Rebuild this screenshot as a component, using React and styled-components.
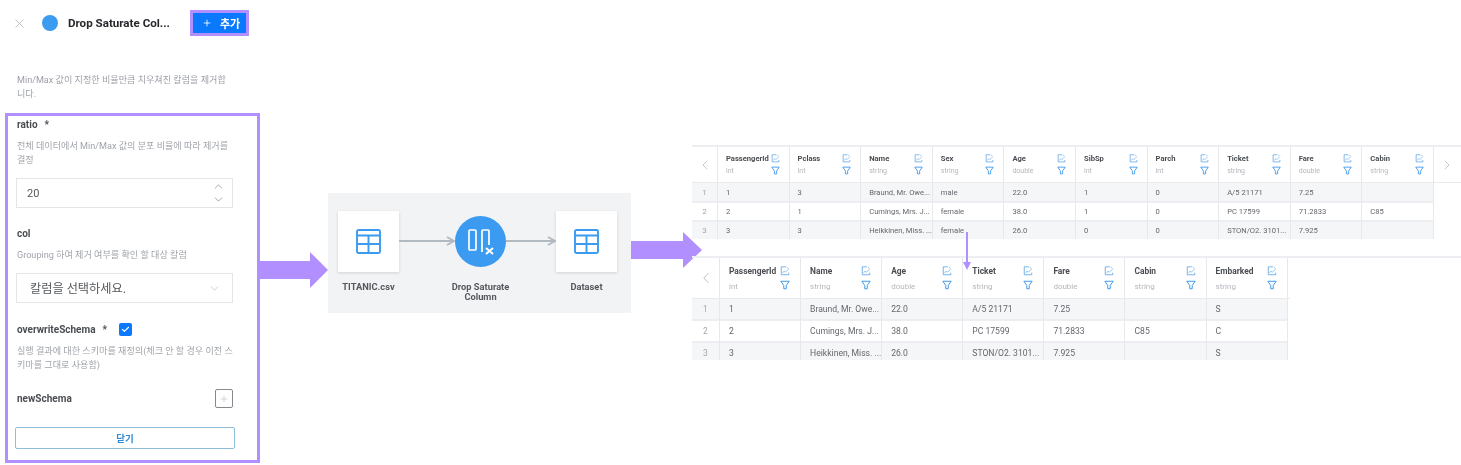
import React from "react";
import styled, {createGlobalStyle} from "styled-components";
import {X, Plus, ChevronUp, ChevronDown, ChevronLeft, ChevronRight, Check} from "lucide-react";

const GlobalStyle = createGlobalStyle`
    html, body {
        margin: 0;
        padding: 0;
        background: #ffffff;
    }
`

const KR = `"Roboto", "Noto Sans CJK KR", sans-serif`
const PURPLE = "#b18fff"
const BLUE = "#3b9bf0"

const Page = styled.div`
    display: flex;
    align-items: flex-start;
    width: 1461px;
    height: 465px;
    overflow: hidden;
    font-family: ${KR};
    filter: blur(0.45px);
`

// LEFT PANEL

const LeftCol = styled.div`
    width: 260px;
    flex: none;
`

const Header = styled.div`
    display: flex;
    align-items: center;
    height: 46px;
    padding-left: 12px;
`

const CloseIcon = styled(X)`
    color: #a9adb3;
    flex: none;
`

const Dot = styled.span`
    width: 16px;
    height: 16px;
    margin-left: 15px;
    border-radius: 50%;
    background: ${BLUE};
    flex: none;
`

const Title = styled.div`
    width: 122px;
    margin-left: 10px;
    font-size: 11.6px;
    font-weight: 700;
    color: #26282c;
    white-space: nowrap;
`

const AddButton = styled.div`
    display: flex;
    align-items: center;
    box-sizing: border-box;
    width: 59px;
    height: 26px;
    padding-left: 9px;
    border: 3px solid ${PURPLE};
    background: #0a78ff;
    color: #ffffff;
    font-size: 11px;
    font-weight: 700;
    gap: 8px;
`

const Lead = styled.div`
    margin: 27px 0 0 17px;
    font-size: 9.1px;
    line-height: 14px;
    color: #9b9fa6;
    white-space: nowrap;
`

const Frame = styled.div`
    box-sizing: border-box;
    width: 255px;
    height: 350px;
    margin: 12px 0 0 5px;
    padding: 0 0 0 8px;
    border: 3px solid ${PURPLE};
`

const Label = styled.div`
    display: flex;
    align-items: center;
    height: 16px;
    padding-left: 1px;
    margin-top: ${p => p.$top || 0}px;
    font-size: 10px;
    font-weight: 700;
    color: #4a4d52;
`

const Required = styled.span`
    margin-left: 7px;
`

const Help = styled.div`
    padding-left: 1px;
    margin-top: 7px;
    font-size: 9.1px;
    line-height: 14px;
    color: #a0a4aa;
    white-space: nowrap;
`

const InputBox = styled.div`
    display: flex;
    align-items: center;
    justify-content: space-between;
    box-sizing: border-box;
    width: 217px;
    height: 30px;
    margin-top: 11px;
    padding: 0 9px 0 10px;
    border: 1px solid #e3e5e8;
    font-size: 11px;
    color: #55585d;
`

const SelectText = styled.span`
    padding-left: 3px;
    font-size: 12.2px;
`

const Spinner = styled.div`
    display: flex;
    flex-direction: column;
    margin-right: -2px;
    color: #666a70;
`

const SelectChevron = styled(ChevronDown)`
    margin-right: 2px;
    color: #a0a3a8;
`

const CheckMark = styled.span`
    display: flex;
    align-items: center;
    justify-content: center;
    width: 13px;
    height: 13px;
    margin-left: 12px;
    border-radius: 2px;
    background: #0a78ff;
    color: #ffffff;
`

const SchemaRow = styled.div`
    display: flex;
    align-items: center;
    justify-content: space-between;
    width: 217px;
    height: 19px;
    margin-top: 17px;
    font-size: 10px;
    font-weight: 700;
    color: #4a4d52;
    padding-left: 1px;
    box-sizing: border-box;
`

const PlusBox = styled.span`
    display: flex;
    align-items: center;
    justify-content: center;
    box-sizing: border-box;
    width: 18px;
    height: 19px;
    border: 1px solid #85888d;
    border-radius: 2px;
    color: #9a9da2;
`

const CloseButton = styled.div`
    display: flex;
    align-items: center;
    justify-content: center;
    box-sizing: border-box;
    width: 220px;
    height: 22px;
    margin: 19px 0 0 -1px;
    border: 1.5px solid #8dbfdb;
    border-radius: 2px;
    font-size: 9.5px;
    font-weight: 700;
    color: #2f8ad4;
`

// BIG ARROWS

const BigArrowSvg = styled.svg`
    flex: none;
    display: block;
    margin-top: ${p => p.$top}px;
    margin-left: ${p => p.$left || 0}px;
    margin-right: ${p => p.$right || 0}px;
`

const BigArrow = ({width, head, ...props}) => (
    <BigArrowSvg width={width} height="36" viewBox={`0 0 ${width} 36`} {...props}>
        <path d={`M0 9H${width - head}V0L${width} 18L${width - head} 36V27H0Z`} fill={PURPLE}/>
    </BigArrowSvg>
)

// FLOW

const FlowBox = styled.div`
    display: flex;
    align-items: flex-start;
    box-sizing: border-box;
    flex: none;
    width: 303px;
    height: 120px;
    margin-top: 193px;
    padding: 18px 0 0 10px;
    background: #f1f3f5;
`

const NodeCol = styled.div`
    display: flex;
    flex-direction: column;
    align-items: center;
    flex: none;
    width: ${p => p.$width}px;
`

const NodeSlot = styled.div`
    display: flex;
    align-items: center;
    justify-content: center;
    height: 61px;
`

const Card = styled.div`
    display: flex;
    align-items: center;
    justify-content: center;
    width: 61px;
    height: 61px;
    background: #ffffff;
    box-shadow: 0 1px 3px rgba(0, 0, 0, 0.14);
`

const Circle = styled.div`
    display: flex;
    align-items: center;
    justify-content: center;
    width: 51px;
    height: 51px;
    border-radius: 50%;
    background: ${BLUE};
`

const NodeLabel = styled.div`
    margin-top: 10px;
    font-size: 9.3px;
    line-height: 10px;
    font-weight: 700;
    color: #55585d;
    text-align: center;
    white-space: nowrap;
`

const LinkSvg = styled.svg`
    flex: none;
    display: block;
    margin-top: 25px;
`

const Link = ({width}) => (
    <LinkSvg width={width} height="10" viewBox={`0 0 ${width} 10`}>
        <path d={`M0 5H${width - 1}M${width - 8} 1L${width - 1} 5L${width - 8} 9`} fill="none" stroke="#b3b9c0" strokeWidth="1.8"/>
    </LinkSvg>
)

const TableIcon = () => (
    <svg width="25" height="25" viewBox="0 0 25 25" fill="none" stroke={BLUE} strokeWidth="1.9">
        <rect x="1" y="1" width="23" height="23" rx="1.5"/>
        <path d="M1 6.5H24M1 15H24M12.5 6.5V24"/>
    </svg>
)

const DropIcon = () => (
    <svg width="26" height="26" viewBox="0 0 26 26" fill="none" stroke="#ffffff" strokeWidth="1.7">
        <rect x="1" y="1" width="7" height="20" rx="1"/>
        <path d="M14 23V2C14 1.4 14.4 1 15 1H20C20.6 1 21 1.4 21 2V16"/>
        <path d="M18 19L25 25M25 19L18 25" strokeWidth="2"/>
    </svg>
)

// TABLES

const TablesCol = styled.div`
    position: relative;
    display: flex;
    flex-direction: column;
    gap: 17px;
    flex: none;
    padding-top: 145px;
`

const DownArrow = styled.svg`
    position: absolute;
    left: 270px;
    top: 232px;
`

const TableWrap = styled.div`
    display: grid;
    grid-template-columns: ${p => p.$first}px repeat(${p => p.$count}, ${p => p.$col}px) ${p => p.$last}px;
    grid-template-rows: ${p => p.$rows};
    box-sizing: border-box;
    height: ${p => p.$height}px;
    overflow: hidden;
    border-top: 2px solid #eceef1;
`

const NavCell = styled.div`
    display: flex;
    align-items: center;
    justify-content: center;
    color: #a9adb3;
    border-bottom: 1px solid #e8eaee;
    border-right: ${p => (p.$side === "left" ? "1px solid #e6e8ec" : "none")};
`

const HeadCell = styled.div`
    display: flex;
    justify-content: space-between;
    box-sizing: border-box;
    padding: ${p => p.$big ? "6px 10px 0 9px" : "5px 9px 0 8px"};
    border-right: 1px solid #e6e8ec;
    border-bottom: 1px solid #e8eaee;
`

const ColName = styled.div`
    font-size: ${p => p.$big ? 8.4 : 7.6}px;
    line-height: ${p => p.$big ? 14 : 13}px;
    font-weight: 700;
    color: #4a4d52;
    white-space: nowrap;
`

const ColType = styled.div`
    margin-top: ${p => p.$big ? 2 : 0}px;
    font-size: ${p => p.$big ? 8 : 7}px;
    line-height: ${p => p.$big ? 14 : 12}px;
    color: #b4b7bc;
`

const HeadIcons = styled.div`
    display: flex;
    flex-direction: column;
    align-items: center;
    gap: ${p => p.$big ? 4 : 3}px;
    padding-top: 2px;
`

const BodyCell = styled.div`
    display: flex;
    align-items: center;
    box-sizing: border-box;
    padding-left: ${p => p.$big ? 9 : 8}px;
    font-size: ${p => p.$big ? 8.6 : 7.6}px;
    color: #64676c;
    white-space: nowrap;
    overflow: hidden;
    background: ${p => p.$odd ? "#f5f6f8" : "#ffffff"};
    border-right: 1px solid #e6e8ec;
    border-bottom: 2px solid #eceef1;
`

const IndexCell = styled(BodyCell)`
    justify-content: center;
    padding-left: 0;
    color: #a3a6ab;
    font-size: ${p => p.$big ? 8.5 : 8}px;
`

const EmptyCell = styled.div`
`

const EditIcon = ({size}) => (
    <svg width={size} height={size} viewBox="0 0 12 12" fill="none" stroke="#5aa5e6" strokeWidth="1">
        <path d="M7 1H1.5V10.5H10.5V8"/>
        <path d="M3 8.5L5 6L6.5 7.5L10.5 3.5" stroke="#7db8ea"/>
        <path d="M8 1L10 3" stroke="#7db8ea"/>
    </svg>
)

const FilterIcon = ({size}) => (
    <svg width={size} height={size} viewBox="0 0 12 12" fill="none" stroke="#3f9ae8" strokeWidth="1.2">
        <path d="M1 1.5H11L7.5 6.5V10.5H4.5V6.5Z" strokeLinejoin="round"/>
    </svg>
)

const COLUMNS = {
    PassengerId: "int", Pclass: "int", Name: "string", Sex: "string", Age: "double", SibSp: "int",
    Parch: "int", Ticket: "string", Fare: "double", Cabin: "string", Embarked: "string",
}

const ROWS = [
    {PassengerId: "1", Pclass: "3", Name: "Braund, Mr. Owe...", Sex: "male", Age: "22.0", SibSp: "1", Parch: "0", Ticket: "A/5 21171", Fare: "7.25", Cabin: "", Embarked: "S"},
    {PassengerId: "2", Pclass: "1", Name: "Cumings, Mrs. J...", Sex: "female", Age: "38.0", SibSp: "1", Parch: "0", Ticket: "PC 17599", Fare: "71.2833", Cabin: "C85", Embarked: "C"},
    {PassengerId: "3", Pclass: "3", Name: "Heikkinen, Miss. ...", Sex: "female", Age: "26.0", SibSp: "0", Parch: "0", Ticket: "STON/O2. 3101...", Fare: "7.925", Cabin: "", Embarked: "S"},
]

const DataTable = ({columns, big, nextArrow, ...layout}) => (
    <TableWrap $count={columns.length} {...layout}>
        <NavCell $side="left"><ChevronLeft size={big ? 18 : 16} strokeWidth={1}/></NavCell>
        {columns.map(name => (
            <HeadCell key={name} $big={big}>
                <div>
                    <ColName $big={big}>{name}</ColName>
                    <ColType $big={big}>{COLUMNS[name]}</ColType>
                </div>
                <HeadIcons $big={big}>
                    <EditIcon size={big ? 10 : 9}/>
                    <FilterIcon size={big ? 10 : 9}/>
                </HeadIcons>
            </HeadCell>
        ))}
        {nextArrow ? <NavCell $side="right"><ChevronRight size={16} strokeWidth={1}/></NavCell> : <NavCell/>}
        {ROWS.map((row, i) => (
            <React.Fragment key={i}>
                <IndexCell $big={big} $odd={i % 2 === 0}>{i + 1}</IndexCell>
                {columns.map(name => <BodyCell key={name} $big={big} $odd={i % 2 === 0}>{row[name]}</BodyCell>)}
                <EmptyCell/>
            </React.Fragment>
        ))}
    </TableWrap>
)

const App = () => (
    <Page>
        <GlobalStyle/>
        <LeftCol>
            <Header>
                <CloseIcon size={15} strokeWidth={1.1}/>
                <Dot/>
                <Title>Drop Saturate Col...</Title>
                <AddButton><Plus size={10} strokeWidth={2}/>추가</AddButton>
            </Header>
            <Lead>Min/Max 값이 지정한 비율만큼 치우쳐진 칼럼을 제거합<br/>니다.</Lead>
            <Frame>
                <Label>ratio<Required>*</Required></Label>
                <Help>전체 데이터에서 Min/Max 값의 분포 비율에 따라 제거를<br/>결정</Help>
                <InputBox>
                    20
                    <Spinner>
                        <ChevronUp size={13} strokeWidth={1.1}/>
                        <ChevronDown size={13} strokeWidth={1.1}/>
                    </Spinner>
                </InputBox>
                <Label $top={17}>col</Label>
                <Help>Grouping 하여 제거 여부를 확인 할 대상 칼럼</Help>
                <InputBox>
                    <SelectText>칼럼을 선택하세요.</SelectText>
                    <SelectChevron size={13} strokeWidth={1}/>
                </InputBox>
                <Label $top={18}>
                    overwriteSchema<Required>*</Required>
                    <CheckMark><Check size={9} strokeWidth={3}/></CheckMark>
                </Label>
                <Help>실행 결과에 대한 스키마를 재정의(체크 안 할 경우 이전 스<br/>키마를 그대로 사용함)</Help>
                <SchemaRow>
                    newSchema
                    <PlusBox><Plus size={10} strokeWidth={1}/></PlusBox>
                </SchemaRow>
                <CloseButton>닫기</CloseButton>
            </Frame>
        </LeftCol>
        <BigArrow width={70} head={18} $top={252} $left={-2}/>
        <FlowBox>
            <NodeCol $width={61}>
                <NodeSlot><Card><TableIcon/></Card></NodeSlot>
                <NodeLabel>TITANIC.csv</NodeLabel>
            </NodeCol>
            <Link width={56}/>
            <NodeCol $width={51}>
                <NodeSlot><Circle><DropIcon/></Circle></NodeSlot>
                <NodeLabel>Drop Saturate<br/>Column</NodeLabel>
            </NodeCol>
            <Link width={50}/>
            <NodeCol $width={61}>
                <NodeSlot><Card><TableIcon/></Card></NodeSlot>
                <NodeLabel>Dataset</NodeLabel>
            </NodeCol>
        </FlowBox>
        <BigArrow width={71} head={19} $top={232} $right={-10}/>
        <TablesCol>
            <DataTable
                columns={["PassengerId", "Pclass", "Name", "Sex", "Age", "SibSp", "Parch", "Ticket", "Fare", "Cabin"]}
                nextArrow
                $first={26} $col={71.6} $last={27} $rows="36px 20px 19px 19px" $height={94}
            />
            <DataTable
                big
                columns={["PassengerId", "Name", "Age", "Ticket", "Fare", "Cabin", "Embarked"]}
                $first={28} $col={81.1} $last={2} $rows="41px 22px 22px 22px" $height={104}
            />
            <DownArrow width="10" height="38" viewBox="0 0 10 38">
                <path d="M4 0H6V30H9L5 38L1 30H4Z" fill={PURPLE}/>
            </DownArrow>
        </TablesCol>
    </Page>
)

export default App
